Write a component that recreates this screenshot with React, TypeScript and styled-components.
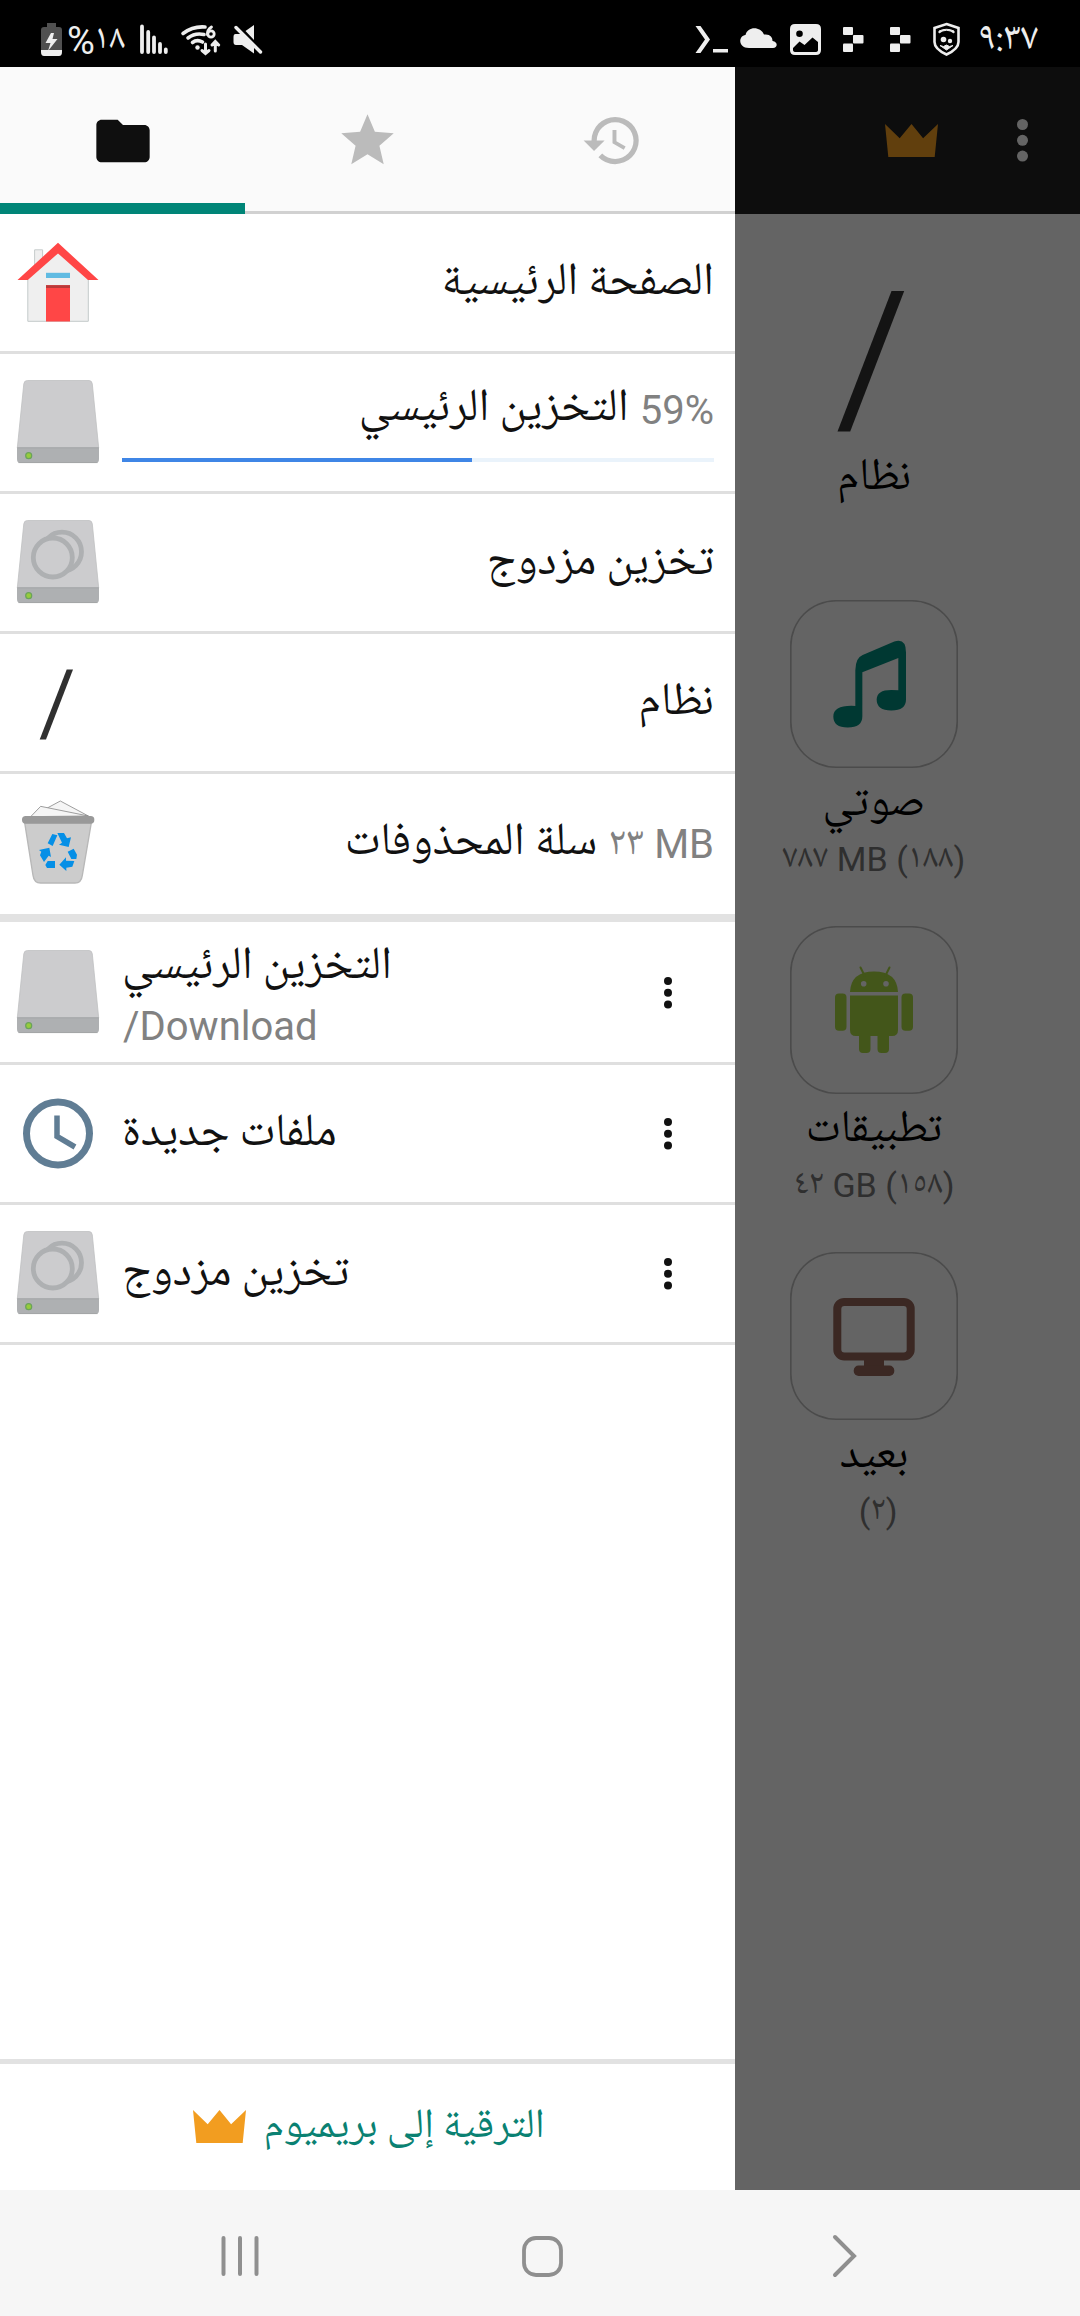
import React from 'react';
import styled, { createGlobalStyle } from 'styled-components';
import { MdFolder, MdHistory, MdStar } from 'react-icons/md';

const GlobalStyle = createGlobalStyle`
  *, *::before, *::after { box-sizing: border-box; }
  body { margin: 0; background: #000; font-family: Roboto, "Noto Naskh Arabic", sans-serif; }
  svg { display: block; overflow: visible; flex: none; }
`;

const Screen = styled.div`
  width: 1080px;
  height: 2316px;
  display: flex;
  flex-direction: column;
  overflow: hidden;
`;

const StatusBar = styled.header`
  height: 67px;
  flex: none;
  display: flex;
  justify-content: space-between;
  align-items: flex-start;
  padding: 0 41px;
  background: #000;
  color: #eee;
`;

const StatusGroup = styled.div`
  display: flex;
  align-items: flex-start;
`;

const Battery = styled.div`
  display: flex;
  width: 99px;
`;

const StatusText = styled.span<{ $size: number }>`
  font-family: "Noto Naskh Arabic", sans-serif;
  font-size: ${(p) => p.$size}px;
  line-height: 67px;
  height: 67px;
  padding-top: 7px;
  white-space: nowrap;
  direction: ltr;
`;

const Clock = styled(StatusText)`
  width: 61px;
  margin-left: 17px;
`;

const Percent = styled.span`
  font-family: Roboto, sans-serif;
  font-size: 38px;
  line-height: 67px;
  padding-top: 8px;
  height: 67px;
  margin: 0 -1px 0 4px;
`;

const Main = styled.main`
  height: 2123px;
  display: flex;
`;

const Drawer = styled.aside`
  width: 735px;
  display: flex;
  flex-direction: column;
  background: #fff;
`;

const Tabs = styled.nav`
  height: 147px;
  flex: none;
  display: grid;
  grid-template-columns: repeat(3, 1fr);
  background: #fafafa;
`;

const Tab = styled.button<{ $active?: boolean }>`
  border: 0;
  padding: ${(p) => (p.$active ? '11px 0 0' : '3px 0 0')};
  border-bottom: ${(p) => (p.$active ? '11px solid #008577' : '3px solid #d1d1d1')};
  background: none;
  color: ${(p) => (p.$active ? '#0f0f0f' : '#bbb')};
  display: flex;
  align-items: center;
  justify-content: center;
`;

const List = styled.div`
  display: flex;
  flex-direction: column;
`;

const Section = styled.section`
  display: flex;
  flex-direction: column;
  & + & { border-top: 8px solid #e2e2e2; }
`;

const Row = styled.div<{ $tall?: boolean; $last?: boolean }>`
  height: ${(p) => (p.$tall ? 143 : 140)}px;
  border-bottom: ${(p) => (p.$last ? '0' : '3px solid #dfdfdf')};
  padding: ${(p) => (p.$tall ? 2 : 0)}px 21px 0 16px;
  display: flex;
  align-items: center;
  gap: 22px;
`;

const RowBody = styled.div<{ $top?: number }>`
  flex: 1;
  align-self: stretch;
  display: flex;
  flex-direction: column;
  padding-top: ${(p) => p.$top ?? 0}px;
`;

const Line = styled.div<{ $end?: boolean }>`
  display: flex;
  align-items: flex-start;
  justify-content: ${(p) => (p.$end ? 'flex-end' : 'flex-start')};
  gap: 11px;
`;

const Name = styled.span`
  font-family: "Noto Naskh Arabic", sans-serif;
  font-size: 46px;
  line-height: 64px;
  height: 64px;
  color: #111;
  direction: rtl;
  white-space: nowrap;
`;

const Detail = styled.span`
  font-size: 40px;
  line-height: 64px;
  height: 64px;
  margin-top: 1px;
  color: #818181;
  direction: ltr;
  white-space: nowrap;
`;

const Numeral = styled.span`
  font-family: "Noto Naskh Arabic", sans-serif;
  line-height: 0;
  vertical-align: 4px;
`;

const Path = styled.span`
  font-size: 40px;
  line-height: 48px;
  height: 48px;
  margin: 3px 0 0 1px;
  color: #818181;
`;

const TrackSlot = styled.div`
  margin-top: auto;
  padding-bottom: 29px;
`;

const Track = styled.div`
  height: 4px;
  background: #eaf3fb;
`;

const Fill = styled.div`
  height: 4px;
  width: 59.1%;
  background: #3f86e6;
`;

const MenuButton = styled.button`
  border: 0;
  padding: 0;
  margin-right: 42px;
  background: none;
  color: #111;
`;

const Footer = styled.footer`
  margin-top: auto;
  height: 131px;
  border-top: 5px solid #e2e2e2;
  display: flex;
  justify-content: center;
  gap: 17px;
  padding: 30px 0 0 3px;
  color: #0a8172;
`;

const FooterText = styled.span`
  font-family: "Noto Naskh Arabic", sans-serif;
  font-size: 41.5px;
  line-height: 64px;
  height: 64px;
  margin-top: 2px;
  direction: rtl;
`;

const CrownSlot = styled.span`
  padding-top: 16px;
`;

const Dimmed = styled.section`
  flex: 1;
  display: flex;
  flex-direction: column;
  background: #646464;
`;

const TopBar = styled.div`
  height: 147px;
  background: #0d0d0d;
  display: flex;
  align-items: center;
  justify-content: flex-end;
  gap: 79px;
  padding-right: 52px;
  color: #646464;
`;

const Cards = styled.div`
  width: 278px;
  padding-top: 60px;
  display: flex;
  flex-direction: column;
`;

const Card = styled.div`
  height: 326px;
  display: flex;
  flex-direction: column;
  align-items: center;
`;

const IconBox = styled.div<{ $framed?: boolean }>`
  width: 168px;
  height: 168px;
  flex: none;
  border-radius: 46px;
  box-shadow: ${(p) => (p.$framed ? 'inset 0 0 0 1.6px #4b4b4b' : 'none')};
`;

const CardName = styled.span`
  font-family: "Noto Naskh Arabic", sans-serif;
  font-size: 45px;
  line-height: 64px;
  height: 55px;
  margin-top: 6px;
  color: #000;
  direction: rtl;
`;

const CardDetail = styled.span`
  font-size: 34px;
  line-height: 60px;
  height: 60px;
  color: #2f2f2f;
  direction: ltr;
  white-space: pre;
`;

const NavBar = styled.nav`
  height: 126px;
  flex: none;
  background: #f6f6f6;
  display: flex;
  align-items: center;
  justify-content: space-between;
  padding: 6px 213px 0 218px;
`;

const NavButton = styled.button`
  width: 44px;
  border: 0;
  padding: 0;
  background: none;
  color: #8f8f8f;
  display: flex;
  justify-content: center;
`;

const BatteryIcon = () => (
  <svg width="22" height="67" viewBox="41 0 22 67">
    <path d="M47 23h9v4h3q3 0 3 3v20H41V30q0-3 3-3h3z" fill="#505050" />
    <path d="M41 50h21v2q0 4-3 4H44q-3 0-3-4z" fill="#eee" />
    <path d="M51 33l-5.500 10h5l-2.500 8 9.500-12h-5l1.500-6z" fill="#eee" />
  </svg>
);

const SignalIcons = () => (
  <svg width="123" height="67" viewBox="140 0 123 67">
    <path
      d="M142 26.500v25.500M148.200 32v20M154 37.500v14.500M160 44v8M165.800 49.500v2.500"
      stroke="#eee"
      strokeWidth="3.800"
      strokeLinecap="round"
    />
    <g fill="none" stroke="#eee" strokeWidth="3.600" strokeLinecap="round">
      <path d="M183 33.500Q193 26 205 27M188 38Q195 32.500 204 34.500M192.500 42.500Q197 39 202.500 42" />
      <path d="M211.500 27Q207 30 207.500 34.500" strokeWidth="2.800" />
      <circle cx="211" cy="34" r="3.200" strokeWidth="2.800" />
      <path d="M205.500 44v9M202 50.500l3.500 3 3.500-3M215.300 51v-9M212 45l3.300-3.500 3.400 3.500" strokeWidth="3" />
    </g>
    <circle cx="197.500" cy="47.500" r="2.200" fill="#eee" />
    <path d="M254 25v15l-8.500-9zM235.500 34h6L254 47v6.500L242 45h-6q-2.500 0-2.500-3v-5q0-3 2-3z" fill="#eee" />
    <path d="M236 27.500l24.500 24.500" stroke="#eee" strokeWidth="3.400" strokeLinecap="round" />
  </svg>
);

const NotificationIcons = () => (
  <svg width="266" height="67" viewBox="695 0 266 67" fill="#eee">
    <path d="M695.500 26h5l9.500 13.500-9.500 13.500h-5l9.500-13.500zM713 49h15v3.500h-15z" />
    <path d="M749 48c-11 0-11-12-3.500-13 2-9 15-9 18.500-.5 6-.8 8.500 2.500 8.500 6.500 6 1 5 7 .5 7z" />
    <path
      fillRule="evenodd"
      d="M795 24h21q5 0 5 5v21q0 5-5 5h-21q-5 0-5-5V29q0-5 5-5zM799.500 30.500a3.300 3.300 0 100 6.600 3.300 3.300 0 000-6.600zM793 48v2q0 2 3 2h19q3 0 3-2v-8l-5.500-4.500-8 7.500-5-3.500z"
    />
    {[843, 890].map((x) => (
      <g key={x}>
        <rect x={x} y="27" width="10" height="8" rx="1" />
        <rect x={x + 10} y="35" width="10.500" height="8.500" rx="1" />
        <rect x={x} y="43.500" width="10" height="8.500" rx="1" />
      </g>
    ))}
    <path d="M946.500 24l12 4v14q0 7-12 12.500-12-5.500-12-12.500V28z" fill="none" stroke="#eee" strokeWidth="2.600" />
    <path d="M939 33q7.500-5.500 15 0v-2q-7.500-3.500-15 0zM940 45.500l3.500 1 3-1.500 3 1.500 3.500-1-6.500 4.500z" stroke="#eee" />
    <circle cx="943.500" cy="39.500" r="2.800" />
    <circle cx="950" cy="41" r="2.200" />
  </svg>
);

const Crown = ({ color }: { color: string }) => (
  <svg width="53" height="33" viewBox="0 0 53 33">
    <path d="M0 0l14.700 14.300L26.500 0l11.600 14.300L53 0l-3.300 33H3.300z" fill={color} />
  </svg>
);

const Dots = ({ r, gap }: { r: number; gap: number }) => (
  <svg width={r * 2} height={gap * 2 + r * 2} fill="currentColor">
    {[0, 1, 2].map((i) => (
      <circle key={i} cx={r} cy={r + i * gap} r={r} />
    ))}
  </svg>
);

const HomeIcon = () => (
  <svg width="84" height="84" viewBox="0 .5 84 84">
    <path d="M18.600 30V9.300h8V22" fill="#efefef" stroke="#c6cccc" />
    <path d="M11.800 36L42 10l30.300 26v44.800H11.800z" fill="#efefef" stroke="#c3caca" />
    <path d="M30 44.700h24V81H30z" fill="#ff4646" />
    <path d="M30 44.700h24v2.800H30z" fill="#b83a3a" />
    <path d="M30 32.300h24v5.200H30z" fill="#60bbe2" />
    <path d="M42 2.300l40.500 37.200H72L42 12.900 11.800 39.500H1.500z" fill="#ff4646" />
  </svg>
);

const DriveIcon = ({ rings }: { rings?: boolean }) => (
  <svg width="84" height="84" viewBox="0 1 84 84">
    <path d="M11.500.500h61.500q3 0 3.300 3.500L82.700 68H1.300L7.800 4Q8 .500 11.500.500z" fill="#ccccce" stroke="#bfc0c1" strokeWidth=".8" />
    {rings && (
      <g fill="#ccccce" stroke="#aeb0b2" strokeWidth="4.800">
        <circle cx="46" cy="31.700" r="19.500" />
        <circle cx="36.800" cy="37.500" r="19.500" />
      </g>
    )}
    <path d="M1 67.500h82V79q0 4-3 4H4q-3 0-3-4z" fill="#aeb0b2" />
    <path d="M1.300 67.800h81.400M2.500 82.600h79" stroke="#9fa1a3" strokeWidth=".8" />
    <circle cx="12.700" cy="75.700" r="3" fill="#96cc3c" stroke="#6aa35a" strokeWidth="1.200" />
  </svg>
);

const RootIcon = () => (
  <svg width="84" height="84" viewBox="0 0 84 84">
    <path d="M50.700 8.500H57L30 78.500h-6.300z" fill="#303030" />
  </svg>
);

const TrashIcon = () => (
  <svg width="84" height="84" viewBox="0 0 84 84">
    <g transform="translate(-16 -302) scale(.33333)">
      <path d="M142 924l39-21 84 45H180z" fill="#f5f5f5" stroke="#8c8c8c" strokeWidth="2.500" />
      <path d="M92 950l30-31 143 29z" fill="#f5f5f5" stroke="#8c8c8c" strokeWidth="2.500" />
      <path d="M74 968h200l-27 158q-3 23-22 23H122q-20 0-23-23z" fill="#ccc" stroke="#b8b8b8" strokeWidth="4" />
      <rect x="66" y="948" width="217" height="23" rx="11" fill="#999" />
      <path
        fill="#058fe6"
        d="M157 1002l15 4-14 32-15-8zM172 999h20l9 16 12-3-7 29-29-7 9-6zM203 1055l18-9 10 18-2 13h-15zM178 1094l20-22v10l25 1-6 17-18 3v10zM143 1083h22v21h-24l-5-9zM117 1050l31-7 5 28-7-4-14 19-12-20 4-11z"
      />
    </g>
  </svg>
);

const ClockIcon = () => (
  <svg width="84" height="84" viewBox="0 0 84 84" fill="none" stroke="#607d94">
    <circle cx="42" cy="41.500" r="31.500" strokeWidth="7" />
    <path d="M41 23.500V44.500l18 10.500" strokeWidth="5.500" />
  </svg>
);

const LargeRootIcon = () => (
  <svg width="168" height="168" viewBox="0 0 168 168">
    <path d="M101.500 17h12.700l-54 140.500H47.500z" fill="#141414" />
  </svg>
);

const MusicIcon = () => (
  <svg width="168" height="168" viewBox="0 0 168 168">
    <path
      transform="translate(-55 -360) scale(.33333 .42088)"
      fill="#003832"
      d="M361 1022Q362 992 383 986L478 954Q513 945 513 980V1092Q513 1118 469 1118 425 1118 425 1092 425 1064 490 1070V993L382 1027V1132Q382 1158 338 1158 295 1158 295 1132 295 1104 361 1107z"
    />
  </svg>
);

const AndroidIcon = () => (
  <svg width="168" height="168" viewBox="0 0 168 168" fill="#43561a">
    <path d="M60 66q1-20.500 24-20.500T108 66zM60 69.500h48V104q0 6-6 6H66q-6 0-6-6z" />
    <rect x="45" y="67.400" width="11.500" height="37.400" rx="4" />
    <rect x="111.500" y="67.400" width="11.500" height="37.400" rx="4" />
    <path d="M69 108h11.500v15q0 4-4 4H73q-4 0-4-4zM87.500 108H99v15q0 4-4 4h-3.500q-4 0-4-4z" />
    <path d="M70.500 41.500l4 8M99.500 41.500l-4 8" stroke="#43561a" strokeWidth="2" strokeLinecap="round" />
    <circle cx="73.700" cy="57.700" r="2.800" fill="#646464" />
    <circle cx="96" cy="57.700" r="2.800" fill="#646464" />
  </svg>
);

const MonitorIcon = () => (
  <svg width="168" height="168" viewBox="0 0 168 168" fill="#3b2823">
    <rect x="47.300" y="49.900" width="73.400" height="54.500" rx="7" fill="none" stroke="#3b2823" strokeWidth="8" />
    <rect x="74" y="107" width="20" height="8" />
    <rect x="63.700" y="113.500" width="40.600" height="10.500" rx="5" />
  </svg>
);

const places = [
  { icon: <HomeIcon />, name: 'الصفحة الرئيسية' },
  { icon: <DriveIcon />, name: 'التخزين الرئيسي', detail: '59%', progress: true },
  { icon: <DriveIcon rings />, name: 'تخزين مزدوج' },
  { icon: <RootIcon />, name: 'نظام' },
  { icon: <TrashIcon />, name: 'سلة المحذوفات', detail: '٢٣ MB' },
];

const bookmarks = [
  { icon: <DriveIcon />, name: 'التخزين الرئيسي', path: '/Download' },
  { icon: <ClockIcon />, name: 'ملفات جديدة' },
  { icon: <DriveIcon rings />, name: 'تخزين مزدوج' },
];

const cards = [
  { icon: <LargeRootIcon />, name: 'نظام' },
  { icon: <MusicIcon />, name: 'صوتي', detail: '٧٨٧ MB (١٨٨)', framed: true },
  { icon: <AndroidIcon />, name: 'تطبيقات', detail: '٤٢ GB (١٥٨)', framed: true },
  { icon: <MonitorIcon />, name: 'بعيد', detail: ' (٢)', framed: true },
];

/* Arabic-Indic digits sit a little above the Latin baseline. */
const Mixed = ({ text }: { text: string }) => (
  <>
    {text.split(/([٠-٩]+)/).map((part, i) => (i % 2 ? <Numeral key={i}>{part}</Numeral> : part))}
  </>
);

export default function App() {
  return (
    <Screen>
      <GlobalStyle />
      <StatusBar>
        <StatusGroup>
          <Battery>
            <BatteryIcon />
            <Percent>%</Percent>
            <StatusText $size={35}>١٨</StatusText>
          </Battery>
          <SignalIcons />
        </StatusGroup>
        <StatusGroup>
          <NotificationIcons />
          <Clock $size={39}>٩:٣٧</Clock>
        </StatusGroup>
      </StatusBar>

      <Main>
        <Drawer>
          <Tabs>
            <Tab $active><MdFolder size={64} /></Tab>
            <Tab><MdStar size={63} /></Tab>
            <Tab><MdHistory size={63} /></Tab>
          </Tabs>
          <List>
            <Section>
              {places.map((p, i) => (
                <Row key={p.name} $last={i === places.length - 1}>
                  {p.icon}
                  <RowBody $top={p.progress ? 24 : 38}>
                    <Line $end>
                      <Name>{p.name}</Name>
                      {p.detail && <Detail><Mixed text={p.detail} /></Detail>}
                    </Line>
                    {p.progress && (
                      <TrackSlot>
                        <Track><Fill /></Track>
                      </TrackSlot>
                    )}
                  </RowBody>
                </Row>
              ))}
            </Section>
            <Section>
              {bookmarks.map((b) => (
                <Row key={b.name} $tall={!!b.path}>
                  {b.icon}
                  <RowBody $top={b.path ? 12 : 38}>
                    <Line><Name>{b.name}</Name></Line>
                    {b.path && <Path>{b.path}</Path>}
                  </RowBody>
                  <MenuButton><Dots r={4} gap={11.700} /></MenuButton>
                </Row>
              ))}
            </Section>
          </List>
          <Footer>
            <CrownSlot><Crown color="#f29d20" /></CrownSlot>
            <FooterText>الترقية إلى بريميوم</FooterText>
          </Footer>
        </Drawer>

        <Dimmed>
          <TopBar>
            <Crown color="#613f0d" />
            <Dots r={5.500} gap={15.800} />
          </TopBar>
          <Cards>
            {cards.map((c) => (
              <Card key={c.name}>
                <IconBox $framed={c.framed}>{c.icon}</IconBox>
                <CardName>{c.name}</CardName>
                {c.detail && <CardDetail><Mixed text={c.detail} /></CardDetail>}
              </Card>
            ))}
          </Cards>
        </Dimmed>
      </Main>

      <NavBar>
        <NavButton>
          <svg width="40" height="40" viewBox="0 0 40 40" stroke="currentColor" strokeWidth="4" strokeLinecap="round">
            <path d="M3.500 2v36M20 2v36M36.500 2v36" />
          </svg>
        </NavButton>
        <NavButton>
          <svg width="41" height="41" viewBox="0 0 41 41" fill="none" stroke="currentColor" strokeWidth="3.800">
            <rect x="2" y="2" width="37" height="37" rx="12" />
          </svg>
        </NavButton>
        <NavButton>
          <svg width="24" height="42" viewBox="0 0 24 42" fill="none" stroke="currentColor" strokeWidth="4" strokeLinecap="round">
            <path d="M2 2l19 19L2 40" />
          </svg>
        </NavButton>
      </NavBar>
    </Screen>
  );
}
